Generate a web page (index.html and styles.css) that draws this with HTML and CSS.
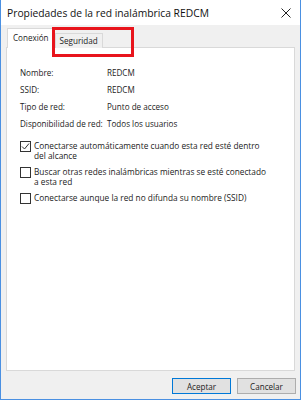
FILE: index.html
```html
<!DOCTYPE html>
<html lang="es">
<head>
  <meta charset="UTF-8" />
  <title>Propiedades de la red inalámbrica REDCM</title>
  <link rel="stylesheet" href="styles.css">
</head>
<body>
  <div class="window">
    <div class="titlebar">
      <span class="title">Propiedades de la red inalámbrica REDCM</span>
      <svg class="close" width="10" height="10" viewBox="0 0 10 10">
        <path d="M0.5 0.5 L9.5 9.5 M9.5 0.5 L0.5 9.5" stroke="#222" stroke-width="1" fill="none"/>
      </svg>
    </div>

    <div class="content">
      <div class="tabs">
        <div class="tab active">Conexión</div>
        <div class="tab">Seguridad</div>
        <!-- red highlight drawn over the second tab -->
        <div class="highlight"></div>
      </div>

      <div class="panel">
        <div class="info">
          <span>Nombre:</span><span>REDCM</span>
          <span>SSID:</span><span>REDCM</span>
          <span>Tipo de red:</span><span>Punto de acceso</span>
          <span>Disponibilidad de red:</span><span>Todos los usuarios</span>
        </div>

        <div class="options">
          <label class="option">
            <span class="box checked">
              <svg width="9" height="9" viewBox="0 0 9 9"><path d="M1 4.5 L3.5 7 L8 1.5" stroke="#333" stroke-width="1" fill="none"/></svg>
            </span>
            <span>Conectarse automáticamente cuando esta red esté dentro del alcance</span>
          </label>
          <label class="option">
            <span class="box"></span>
            <span>Buscar otras redes inalámbricas mientras se esté conectado a esta red</span>
          </label>
          <label class="option">
            <span class="box"></span>
            <span>Conectarse aunque la red no difunda su nombre (SSID)</span>
          </label>
        </div>
      </div>

      <div class="buttons">
        <button class="btn default">Aceptar</button>
        <button class="btn">Cancelar</button>
      </div>
    </div>
  </div>
</body>
</html>
```

FILE: styles.css
```css
* {
  margin: 0;
  padding: 0;
  box-sizing: border-box;
}

body {
  font-family: "Open Sans", "Noto Sans", sans-serif;
  font-size: 8.1px;
  color: #222;
  background: #fff;
}

.window {
  width: 301px;
  height: 400px;
  display: flex;
  flex-direction: column;
  border: 1px solid #4a90e2;
  border-top: none;
}

.titlebar {
  height: 25px;
  background: #fff;
  display: flex;
  align-items: center;
  justify-content: space-between;
  padding: 0 9px 0 6px;
}

.title {
  font-size: 10.3px;
  color: #111;
}

.content {
  flex: 1;
  background: #f0f0f0;
  display: flex;
  flex-direction: column;
  padding: 3px 5px 0 5px;
}

.tabs {
  position: relative;
  display: flex;
  align-items: flex-end;
  height: 19px;
}

.tab {
  height: 15px;
  line-height: 13px;
  padding: 0 4px;
  border: 1px solid #d9d9d9;
  border-bottom: none;
  background: #f0f0f0;
  margin-bottom: -1px;
}

.tab.active {
  height: 20px;
  line-height: 17px;
  padding: 0 5px;
  background: #fff;
  position: relative;
  z-index: 1;
  margin-left: 1px;
}

.highlight {
  position: absolute;
  left: 46px;
  top: -1px;
  width: 82px;
  height: 30px;
  border: 3px solid #e8141c;
  z-index: 2;
}

.panel {
  height: 324px;
  background: #fff;
  border: 1px solid #d9d9d9;
  padding: 16px 10px 0 13px;
}

.info {
  display: grid;
  grid-template-columns: 87px 1fr;
  grid-auto-rows: 17px;
  align-items: center;
}

.options {
  margin-top: 9px;
  display: flex;
  flex-direction: column;
  gap: 6px;
  font-size: 8.3px;
}

.option {
  display: flex;
  align-items: flex-start;
  gap: 3px;
  line-height: 10px;
  padding-right: 14px;
}

.box {
  flex: none;
  width: 11px;
  height: 11px;
  border: 1px solid #333;
  background: #fff;
  display: flex;
  align-items: center;
  justify-content: center;
}

.buttons {
  display: flex;
  justify-content: flex-end;
  gap: 6px;
  padding: 7px 0 0 0;
  margin-right: -1px;
}

.btn {
  width: 59px;
  height: 16px;
  font-family: inherit;
  font-size: 8.1px;
  color: #222;
  background: #e1e1e1;
  border: 1px solid #adadad;
}

.btn.default {
  border: 1px solid #0078d7;
}
```
